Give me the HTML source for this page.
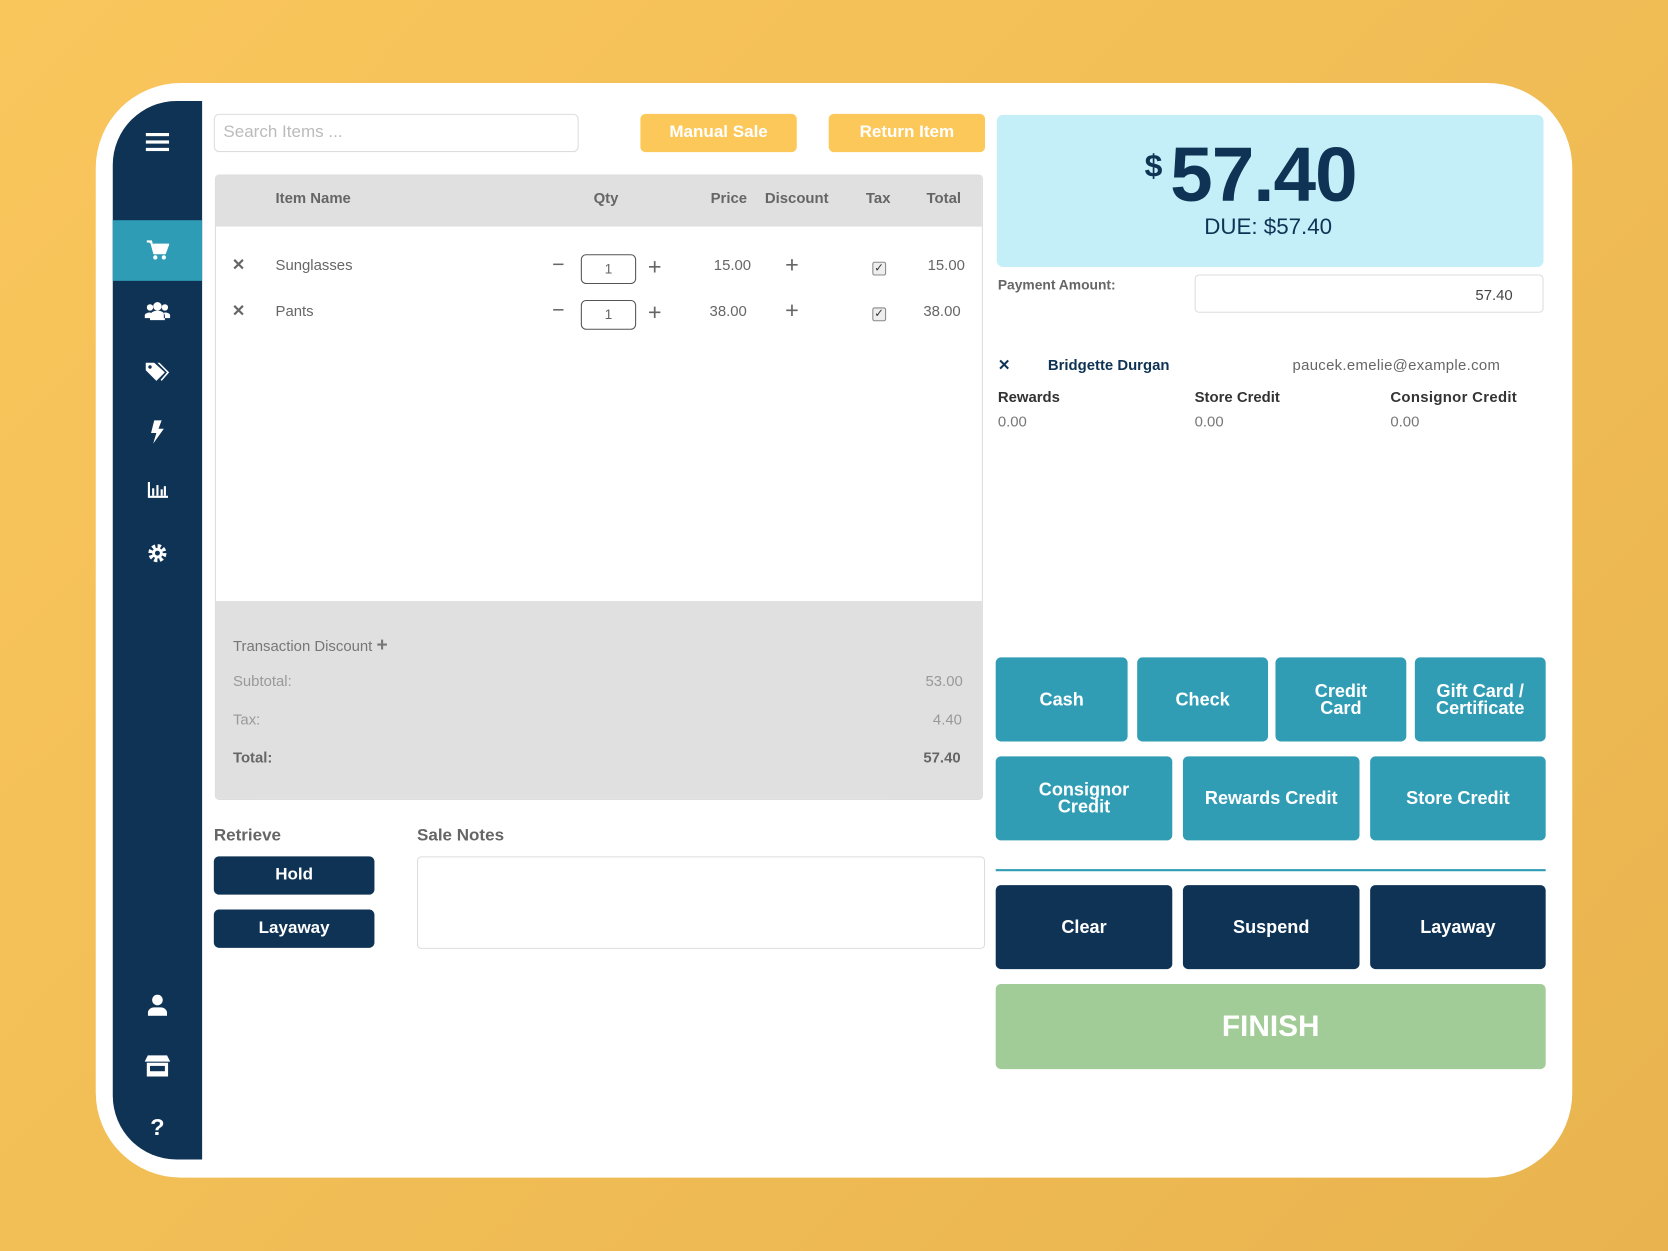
<!DOCTYPE html>
<html><head><meta charset="utf-8"><style>
*{box-sizing:border-box;margin:0;padding:0}
html,body{width:1668px;height:1251px;overflow:hidden}
body{background:linear-gradient(135deg,#f9c65c,#e9b44f);font-family:"Liberation Sans",sans-serif}
#w{position:absolute;left:0;top:0;width:1568px;height:1176px;transform:scale(1.06378,1.06378);transform-origin:0 0}
.a{position:absolute}
.card{left:90px;top:78px;width:1388px;height:1029px;background:#fff;border-radius:80px}
.side{left:106px;top:95px;width:84px;height:995px;background:#0f3354;border-radius:60px 0 0 60px}
.ic{position:absolute;left:0;width:84px;text-align:center;color:#fff}
.btny{background:#fdc85a;color:#fff;font-weight:bold;font-size:16px;border-radius:5px;text-align:center;line-height:36px}
.g{color:#666}
.t{background:#319db5;color:#fff;font-weight:bold;font-size:17px;border-radius:5px;display:flex;align-items:center;justify-content:center;text-align:center;line-height:16px}
.d{background:#0f3354;color:#fff;font-weight:bold;font-size:17px;border-radius:5px;display:flex;align-items:center;justify-content:center}
.qty{width:52px;height:28px;border:1px solid #555;border-radius:5px;text-align:center;line-height:26px;font-size:13px;color:#666}
.cb{width:13px;height:13px;border:1px solid #888;background:#eee;border-radius:2px;font-size:11px;line-height:11px;text-align:center;color:#333}
.s14{font-size:14px}
</style></head><body><div id="w">
<div class="a card"></div>
<div class="a side">
 <div class="ic" style="top:30px"><svg width="22" height="18" viewBox="0 0 22 18"><rect y="0" width="22" height="3" fill="#fff"/><rect y="7" width="22" height="3" fill="#fff"/><rect y="14" width="22" height="3" fill="#fff"/></svg></div>
 <div style="position:absolute;left:0;top:112px;width:84px;height:57px;background:#2f9cb5"></div>
 <div class="ic" style="top:130px"><svg width="22" height="20" viewBox="0 0 22 20"><path d="M1 2h4l3 11h10l3-8H7" fill="#fff" stroke="#fff" stroke-width="2"/><circle cx="9" cy="17" r="2" fill="#fff"/><circle cx="17" cy="17" r="2" fill="#fff"/></svg></div>
 <div class="ic" style="top:188px"><svg width="24" height="18" viewBox="0 0 24 18"><circle cx="12" cy="5" r="4" fill="#fff"/><circle cx="5" cy="6" r="3" fill="#fff"/><circle cx="19" cy="6" r="3" fill="#fff"/><path d="M5 18v-4a7 5 0 0 1 14 0v4z M0 16v-3a5 4 0 0 1 6-2v5z M24 16v-3a5 4 0 0 0-6-2v5z" fill="#fff"/></svg></div>
 <div class="ic" style="top:244px"><svg width="24" height="20" viewBox="0 0 24 20"><path d="M1 2h8l10 9-8 8L1 9z" fill="#fff"/><path d="M12 2h2l9 9-7 8-1-1 6-7z" fill="#fff"/><circle cx="5" cy="6" r="1.6" fill="#0f3354"/></svg></div>
 <div class="ic" style="top:300px"><svg width="14" height="22" viewBox="0 0 14 22"><path d="M4 0h7L8 8h5L3 22l3-10H1z" fill="#fff"/></svg></div>
 <div class="ic" style="top:358px"><svg width="20" height="16" viewBox="0 0 20 16"><path d="M1 0v15h19v-2H3V0z" fill="#fff"/><rect x="5" y="6" width="2" height="7" fill="#fff"/><rect x="9" y="3" width="2" height="10" fill="#fff"/><rect x="13" y="7" width="2" height="6" fill="#fff"/><rect x="16" y="4" width="2" height="9" fill="#fff"/></svg></div>
 <div class="ic" style="top:415px"><svg width="20" height="20" viewBox="0 0 20 20"><circle cx="10" cy="10" r="6.5" fill="none" stroke="#fff" stroke-width="4" stroke-dasharray="3 2.1"/><circle cx="10" cy="10" r="5" fill="#fff"/><circle cx="10" cy="10" r="2.3" fill="#0f3354"/></svg></div>
 <div class="ic" style="top:840px"><svg width="18" height="20" viewBox="0 0 18 20"><circle cx="9" cy="5" r="5" fill="#fff"/><path d="M0 20v-3a6 5 0 0 1 6-5h6a6 5 0 0 1 6 5v3z" fill="#fff"/></svg></div>
 <div class="ic" style="top:897px"><svg width="24" height="20" viewBox="0 0 24 20"><path d="M3 0h18l3 6H0z" fill="#fff"/><path d="M2 7h20v13H2z" fill="#fff"/><rect x="5" y="10" width="14" height="5" fill="#0f3354"/></svg></div>
 <div class="ic" style="top:952px;font-weight:bold;font-size:22px">?</div>
</div>

<div class="a" style="left:201px;top:107px;width:343px;height:36px;border:1px solid #ddd;border-radius:5px;color:#bbb;font-size:16px;line-height:34px;padding-left:8px">Search Items ...</div>
<div class="a btny" style="left:602px;top:107px;width:147px;height:36px">Manual Sale</div>
<div class="a btny" style="left:779px;top:107px;width:147px;height:36px">Return Item</div>

<div class="a" style="left:202px;top:164px;width:722px;height:588px;border:1px solid #ddd;border-radius:4px;overflow:hidden">
 <div style="height:48px;background:#e0e0e0"></div>
 <div style="position:absolute;left:0;top:400px;width:722px;height:188px;background:#e0e0e0"></div>
</div>
<div class="a g s14" style="top:178px;left:259px;font-weight:bold">Item Name</div>
<div class="a g s14" style="top:178px;left:558px;font-weight:bold">Qty</div>
<div class="a g s14" style="top:178px;left:668px;font-weight:bold">Price</div>
<div class="a g s14" style="top:178px;left:719px;font-weight:bold">Discount</div>
<div class="a g s14" style="top:178px;left:814px;font-weight:bold">Tax</div>
<div class="a g s14" style="top:178px;left:871px;font-weight:bold">Total</div>

<div class="a g" style="top:240px;left:218px;font-weight:bold;font-size:15px">✕</div>
<div class="a g s14" style="top:241px;left:259px">Sunglasses</div>
<div class="a g" style="top:238px;left:519px;font-size:20px">−</div>
<div class="a qty" style="top:239px;left:546px">1</div>
<div class="a g" style="top:238px;left:609px;font-size:22px">+</div>
<div class="a g s14" style="top:241px;left:671px">15.00</div>
<div class="a g" style="top:236px;left:738px;font-size:22px">+</div>
<div class="a cb" style="top:246px;left:820px">✓</div>
<div class="a g s14" style="top:241px;left:872px">15.00</div>

<div class="a g" style="top:283px;left:218px;font-weight:bold;font-size:15px">✕</div>
<div class="a g s14" style="top:284px;left:259px">Pants</div>
<div class="a g" style="top:281px;left:519px;font-size:20px">−</div>
<div class="a qty" style="top:282px;left:546px">1</div>
<div class="a g" style="top:281px;left:609px;font-size:22px">+</div>
<div class="a g s14" style="top:284px;left:667px">38.00</div>
<div class="a g" style="top:279px;left:738px;font-size:22px">+</div>
<div class="a cb" style="top:289px;left:820px">✓</div>
<div class="a g s14" style="top:284px;left:868px">38.00</div>

<div class="a g s14" style="top:596px;left:219px;color:#777">Transaction Discount <b style="font-size:18px">+</b></div>
<div class="a s14" style="top:632px;left:219px;color:#999">Subtotal:</div>
<div class="a s14" style="top:632px;left:870px;color:#999">53.00</div>
<div class="a s14" style="top:668px;left:219px;color:#999">Tax:</div>
<div class="a s14" style="top:668px;left:877px;color:#999">4.40</div>
<div class="a g s14" style="top:704px;left:219px;font-weight:bold">Total:</div>
<div class="a g s14" style="top:704px;left:868px;font-weight:bold">57.40</div>

<div class="a g" style="top:777px;left:201px;font-weight:bold;font-size:16px">Retrieve</div>
<div class="a g" style="top:777px;left:392px;font-weight:bold;font-size:16px">Sale Notes</div>
<div class="a d" style="left:201px;top:805px;width:151px;height:36px;font-size:16px">Hold</div>
<div class="a d" style="left:201px;top:855px;width:151px;height:36px;font-size:16px">Layaway</div>
<div class="a" style="left:392px;top:805px;width:534px;height:87px;border:1px solid #ddd;border-radius:4px"></div>

<div class="a" style="left:937px;top:108px;width:514px;height:143px;background:#c5eff8;border-radius:6px"></div>
<div class="a" style="left:1076px;top:140px;color:#0f3354;font-weight:bold;font-size:30px">$</div>
<div class="a" style="left:1100px;top:124px;color:#0f3354;font-weight:bold;font-size:72px;letter-spacing:-1px">57.40</div>
<div class="a" style="left:1132px;top:202px;color:#0f3354;font-size:21px">DUE: $57.40</div>
<div class="a g" style="left:938px;top:260px;font-weight:bold;font-size:13px">Payment Amount:</div>
<div class="a" style="left:1123px;top:258px;width:328px;height:36px;border:1px solid #ddd;border-radius:4px;text-align:right;padding-right:28px;line-height:36px;font-size:14px;color:#444">57.40</div>

<div class="a" style="left:938px;top:335px;color:#0f3354;font-weight:bold;font-size:14px">✕</div>
<div class="a" style="left:985px;top:335px;color:#0f3354;font-weight:bold;font-size:14px">Bridgette Durgan</div>
<div class="a" style="left:1215px;top:335px;color:#666;font-size:14px;letter-spacing:0.3px">paucek.emelie@example.com</div>
<div class="a" style="left:938px;top:365px;color:#333;font-weight:bold;font-size:14px">Rewards</div>
<div class="a" style="left:1123px;top:365px;color:#333;font-weight:bold;font-size:14px">Store Credit</div>
<div class="a" style="left:1307px;top:365px;color:#333;font-weight:bold;font-size:14px;letter-spacing:0.3px">Consignor Credit</div>
<div class="a" style="left:938px;top:388px;color:#777;font-size:14px">0.00</div>
<div class="a" style="left:1123px;top:388px;color:#777;font-size:14px">0.00</div>
<div class="a" style="left:1307px;top:388px;color:#777;font-size:14px">0.00</div>

<div class="a t" style="left:936px;top:618px;width:124px;height:79px">Cash</div>
<div class="a t" style="left:1069px;top:618px;width:123px;height:79px">Check</div>
<div class="a t" style="left:1199px;top:618px;width:123px;height:79px">Credit<br>Card</div>
<div class="a t" style="left:1330px;top:618px;width:123px;height:79px">Gift Card /<br>Certificate</div>
<div class="a t" style="left:936px;top:711px;width:166px;height:79px">Consignor<br>Credit</div>
<div class="a t" style="left:1112px;top:711px;width:166px;height:79px">Rewards Credit</div>
<div class="a t" style="left:1288px;top:711px;width:165px;height:79px">Store Credit</div>
<div class="a" style="left:936px;top:817px;width:517px;height:2px;background:#319db5"></div>
<div class="a d" style="left:936px;top:832px;width:166px;height:79px">Clear</div>
<div class="a d" style="left:1112px;top:832px;width:166px;height:79px">Suspend</div>
<div class="a d" style="left:1288px;top:832px;width:165px;height:79px">Layaway</div>
<div class="a" style="left:936px;top:925px;width:517px;height:80px;background:#a2cc97;border-radius:5px;color:#fff;font-weight:bold;font-size:28px;display:flex;align-items:center;justify-content:center">FINISH</div>
</div></body></html>
